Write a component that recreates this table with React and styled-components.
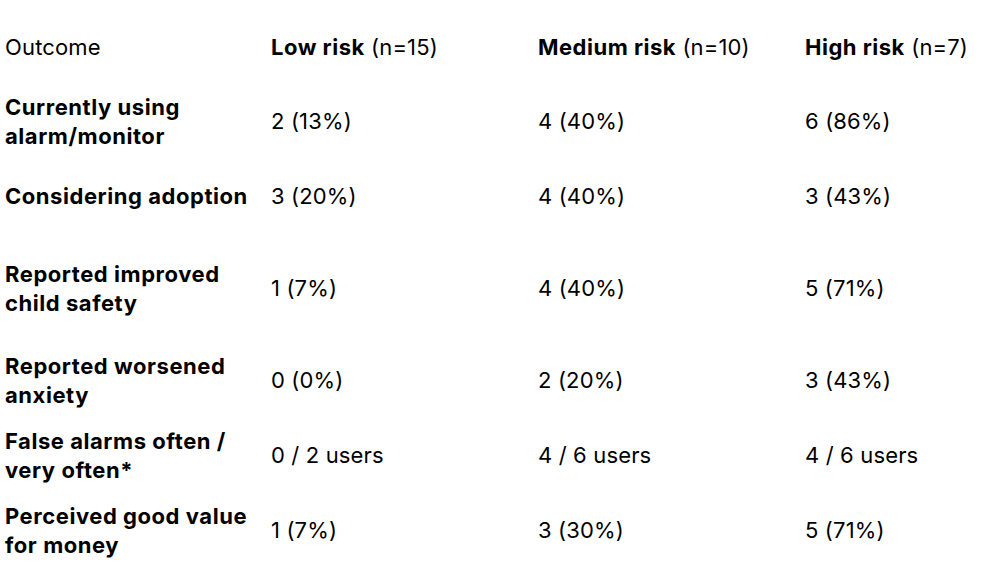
import React from 'react';
import styled, { createGlobalStyle } from 'styled-components';

const GlobalStyle = createGlobalStyle`
  html, body {
    margin: 0;
    padding: 0;
    background: #ffffff;
  }
  body {
    font-family: Inter, "Open Sans", "Liberation Sans", sans-serif;
    color: #000000;
  }
`;

const columns = [
  { label: 'Low risk', n: 15 },
  { label: 'Medium risk', n: 10 },
  { label: 'High risk', n: 7 },
];

const rows = [
  { outcome: ['Currently using', 'alarm/monitor'], values: ['2 (13%)', '4 (40%)', '6 (86%)'], height: 75 },
  { outcome: ['Considering adoption'], values: ['3 (20%)', '4 (40%)', '3 (43%)'], height: 75 },
  { outcome: ['Reported improved', 'child safety'], values: ['1 (7%)', '4 (40%)', '5 (71%)'], height: 109 },
  { outcome: ['Reported worsened', 'anxiety'], values: ['0 (0%)', '2 (20%)', '3 (43%)'], height: 75 },
  { outcome: ['False alarms often /', 'very often*'], values: ['0 / 2 users', '4 / 6 users', '4 / 6 users'], height: 75 },
  { outcome: ['Perceived good value', 'for money'], values: ['1 (7%)', '3 (30%)', '5 (71%)'], height: 75 },
];

const App = () => {
  return (
    <>
      <GlobalStyle />
      <Table>
        <Row $height={74}>
          <Cell>Outcome</Cell>
          {columns.map((col) => (
            <Cell key={col.label}>
              <Strong>{col.label}</Strong> (n={col.n})
            </Cell>
          ))}
        </Row>
        {rows.map((row) => (
          <Row key={row.outcome[0]} $height={row.height}>
            <Label>
              {row.outcome.map((line) => (
                <span key={line}>{line}</span>
              ))}
            </Label>
            {row.values.map((v, i) => (
              <Cell key={i}>{v}</Cell>
            ))}
          </Row>
        ))}
      </Table>
    </>
  );
};

export default App;

const Table = styled.div`
  display: flex;
  flex-direction: column;
  padding: 10px 0 0 5px;
`;

const Row = styled.div`
  display: grid;
  grid-template-columns: 266px 267px 267px 1fr;
  align-items: center;
  height: ${(p) => p.$height}px;
`;

const Cell = styled.div`
  font-size: 22px;
  line-height: 29px;
  letter-spacing: 0.15px;
  white-space: nowrap;
`;

const Strong = styled.span`
  font-weight: 700;
  letter-spacing: 0.5px;
`;

const Label = styled.div`
  display: flex;
  flex-direction: column;
  font-size: 22px;
  line-height: 29px;
  font-weight: 700;
  letter-spacing: 0.55px;
  white-space: nowrap;
`;
